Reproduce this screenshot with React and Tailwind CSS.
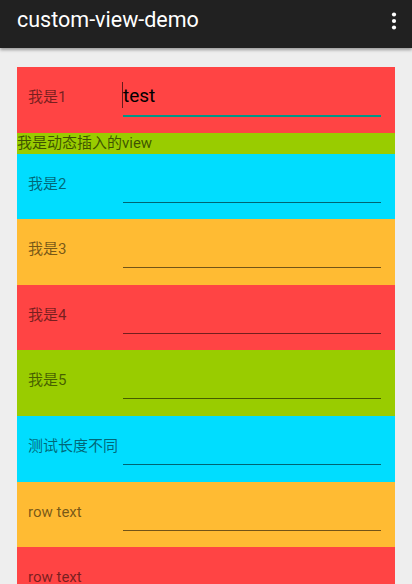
import React from "react";

const font = { fontFamily: 'Roboto, "Noto Sans CJK SC", sans-serif' };

function Row({ bg, label, focused, value }) {
  return (
    <div className={`flex h-[65.6px] shrink-0 ${bg}`}>
      <div className="w-[106px] shrink-0 pl-[11px] pt-[20px] text-[15px] leading-[20px] text-black/55 whitespace-nowrap">
        {label}
      </div>
      {focused ? (
        <div className="mr-[14px] mt-[14px] h-[36px] flex-1 border-b-2 border-[#009688]">
          <div className="flex items-start">
            <div className="-ml-px mt-[1px] h-[26px] w-px bg-black/60" />
            <span className="pt-[2px] text-[19px] leading-[26px] text-black">{value}</span>
          </div>
        </div>
      ) : (
        <div className="mr-[14px] mt-[14px] h-[35px] flex-1 border-b border-black/55" />
      )}
    </div>
  );
}

export default function App() {
  return (
    <div className="flex h-[584px] w-[412px] flex-col overflow-hidden bg-[#eeeeee]" style={font}>
      <div className="relative z-10 flex h-12 shrink-0 items-start justify-between bg-[#212121] pl-[17px] pr-[14px] shadow-[0_2px_3px_rgba(0,0,0,0.35)]">
        <span className="pt-[8px] text-[21.5px] leading-[24px] text-white">custom-view-demo</span>
        <svg width="6" height="20" viewBox="0 0 6 20" className="mt-[11px] mr-[1px]">
          <circle cx="3" cy="3.5" r="2.1" fill="#fff" />
          <circle cx="3" cy="10" r="2.1" fill="#fff" />
          <circle cx="3" cy="16.5" r="2.1" fill="#fff" />
        </svg>
      </div>
      <div className="mx-[17px] mt-[19px] flex flex-1 flex-col overflow-hidden">
        <Row bg="bg-[#ff4444]" label="我是1" focused value="test" />
        <div className="h-[21px] shrink-0 bg-[#99cc00] text-[15px] leading-[21px] text-black/60 whitespace-nowrap">
          我是动态插入的view
        </div>
        <Row bg="bg-[#00ddff]" label="我是2" />
        <Row bg="bg-[#ffbb33]" label="我是3" />
        <Row bg="bg-[#ff4444]" label="我是4" />
        <Row bg="bg-[#99cc00]" label="我是5" />
        <Row bg="bg-[#00ddff]" label="测试长度不同" />
        <Row bg="bg-[#ffbb33]" label="row text" />
        <Row bg="bg-[#ff4444]" label="row text" />
      </div>
    </div>
  );
}
